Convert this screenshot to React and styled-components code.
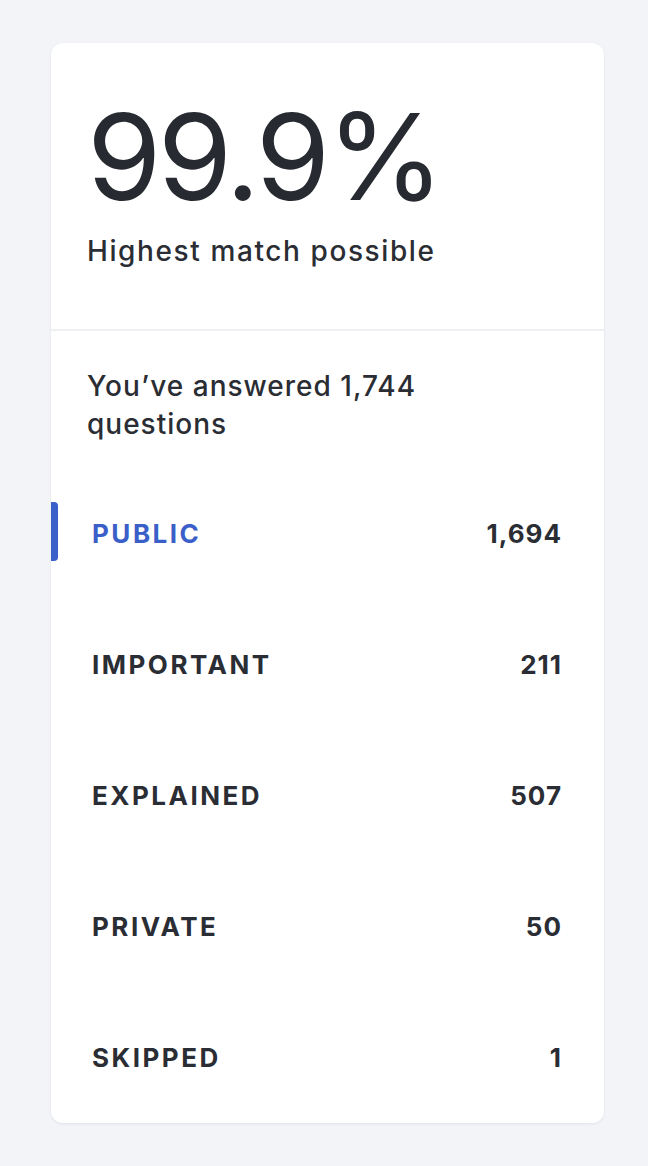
import React from "react";
import styled, { createGlobalStyle } from "styled-components";

const Global = createGlobalStyle`
  html, body { margin: 0; padding: 0; background: #f3f4f8; }
  body { font-family: Inter, "Noto Sans", sans-serif; color: #2a2d33; }
`;

const Page = styled.div`
  padding: 43px 44px 44px 51px;
`;

const Card = styled.div`
  width: 553px;
  background: #fff;
  border-radius: 12px;
  box-shadow: 0 1px 3px rgba(20, 30, 60, 0.08);
  overflow: hidden;
`;

const Top = styled.div`
  padding: 54px 36px 60px 36px;
  border-bottom: 2px solid #eef0f3;
`;

const Big = styled.div`
  font-size: 120px;
  line-height: 120px;
  font-weight: 400;
  letter-spacing: -3.6px;
  color: #272a30;
`;

const Sub = styled.div`
  margin-top: 16px;
  font-size: 28px;
  line-height: 36px;
  font-weight: 500;
  letter-spacing: 1.6px;
`;

const Bottom = styled.div`
  padding-top: 36px;
`;

const Answered = styled.div`
  padding: 0 36px;
  font-size: 28px;
  line-height: 38px;
  font-weight: 500;
  letter-spacing: 1px;
  max-width: 360px;
`;

const List = styled.div`
  margin-top: 25px;
`;

const Row = styled.div`
  position: relative;
  height: 131px;
  display: flex;
  align-items: center;
  justify-content: space-between;
  padding: 0 42px 0 41px;
`;

const Marker = styled.span`
  position: absolute;
  left: 0;
  top: 34px;
  width: 7px;
  height: 59px;
  background: #3a5fc8;
  border-radius: 0 4px 4px 0;
`;

const Label = styled.span`
  font-size: 26px;
  font-weight: 700;
  letter-spacing: 2.5px;
  color: ${(p) => (p.$active ? "#3a5fc8" : "#2a2d33")};
`;

const Count = styled.span`
  font-size: 26px;
  font-weight: 700;
  letter-spacing: 1px;
`;

const rows = [
  ["PUBLIC", "1,694", true],
  ["IMPORTANT", "211"],
  ["EXPLAINED", "507"],
  ["PRIVATE", "50"],
  ["SKIPPED", "1"],
];

export default function App() {
  return (
    <>
      <Global />
      <Page>
        <Card>
          <Top>
            <Big>99.9%</Big>
            <Sub>Highest match possible</Sub>
          </Top>
          <Bottom>
            <Answered>You’ve answered 1,744 questions</Answered>
            <List>
              {rows.map(([l, c, a]) => (
                <Row key={l}>
                  {a && <Marker />}
                  <Label $active={a}>{l}</Label>
                  <Count>{c}</Count>
                </Row>
              ))}
            </List>
          </Bottom>
        </Card>
      </Page>
    </>
  );
}
